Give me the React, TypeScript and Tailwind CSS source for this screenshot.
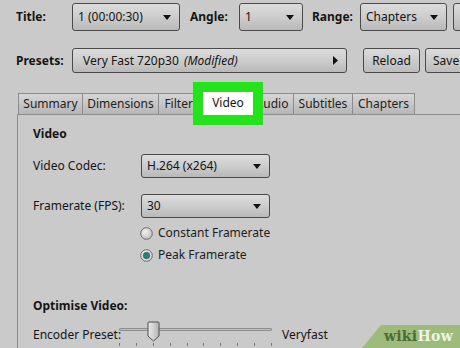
import type { ReactNode } from 'react';

const font = { fontFamily: '"Noto Sans", "Open Sans", Arial, sans-serif' };

function Arrow() {
  return (
    <svg width="8" height="5" viewBox="0 0 8 5" className="shrink-0">
      <path d="M0 0 H8 L4 5 Z" fill="#111" />
    </svg>
  );
}

function Select({ value, w, h = 'h-[28px]', right }: { value: ReactNode; w: string; h?: string; right?: boolean }) {
  return (
    <div
      className={`${w} ${h} shrink-0 flex items-center justify-between pl-[5px] pr-[8px] rounded-[3px] border border-[#4a4a4a] bg-gradient-to-b from-[#dcdcdc] via-[#cdcdcd] to-[#b9b9b9] text-[#151515] overflow-hidden whitespace-nowrap`}
    >
      <span>{value}</span>
      {right ? (
        <svg width="5" height="9" viewBox="0 0 5 9" className="shrink-0">
          <path d="M0 0 L5 4.5 L0 9 Z" fill="#111" />
        </svg>
      ) : (
        <Arrow />
      )}
    </div>
  );
}

function Tab({ label, w }: { label: string; w: string }) {
  return (
    <div
      className={`${w} h-[21px] shrink-0 flex items-center justify-center border border-b-0 border-[#8c8c8c] bg-gradient-to-b from-[#d6d6d6] to-[#b6b6b6] text-[#222] -ml-px first:ml-0`}
    >
      {label}
    </div>
  );
}

function Radio({ checked, label }: { checked?: boolean; label: string }) {
  return (
    <div className="flex items-center h-[16px] pl-[139px]">
      <svg width="13" height="13" viewBox="0 0 13 13" className="shrink-0">
        <defs>
          <radialGradient id={checked ? 'rg1' : 'rg0'} cx="0.4" cy="0.35" r="0.7">
            <stop offset="0" stopColor={checked ? '#eef6f6' : '#f2f2f2'} />
            <stop offset="1" stopColor={checked ? '#c8d2d4' : '#bdbdbd'} />
          </radialGradient>
        </defs>
        <circle cx="6.5" cy="6.5" r="5.8" fill={`url(#${checked ? 'rg1' : 'rg0'})`} stroke="#6a6a6a" strokeWidth="1" />
        {checked && <circle cx="6.5" cy="6.5" r="3.2" fill="#2f7d7a" stroke="#1c4f4d" strokeWidth="0.6" />}
      </svg>
      <span className="ml-[5px] text-[#1d1d1d]">{label}</span>
    </div>
  );
}

function Slider() {
  return (
    <div className="relative w-[153px] h-[28px] shrink-0">
      <div className="absolute left-0 right-0 top-[8px] h-[3px] border border-[#8f8f8f] bg-[#bdbdbd] rounded-[1px]" />
      <div className="absolute left-0 right-0 top-[23px] flex justify-between">
        {Array.from({ length: 10 }).map((_, i) => (
          <div key={i} className="w-px h-[3px] bg-[#777]" />
        ))}
      </div>
      <svg width="13" height="21" viewBox="0 0 13 21" className="absolute left-[28px] top-[1px]">
        <defs>
          <linearGradient id="th" x1="0" x2="1" y1="0" y2="0">
            <stop offset="0" stopColor="#ececec" />
            <stop offset="1" stopColor="#b4b4b4" />
          </linearGradient>
        </defs>
        <path d="M1 2 Q1 1 2 1 H11 Q12 1 12 2 V15 L6.5 20 L1 15 Z" fill="url(#th)" stroke="#4d4d4d" strokeWidth="1" />
      </svg>
    </div>
  );
}

export default function App() {
  return (
    <div className="relative w-[460px] h-[348px] overflow-hidden bg-[#cacaca] text-[12px] leading-[16px] text-[#151515] flex flex-col" style={font}>
      {/* top row */}
      <div className="flex items-center pt-[3px] pl-[16px] whitespace-nowrap">
        <span className="w-[56px] shrink-0 font-bold">Title:</span>
        <Select value="1 (00:00:30)" w="w-[108px]" />
        <span className="ml-[10px] w-[49px] shrink-0 font-bold">Angle:</span>
        <Select value="1" w="w-[64px]" />
        <span className="ml-[9px] w-[48px] shrink-0 font-bold">Range:</span>
        <Select value="Chapters" w="w-[87px]" />
        <div className="ml-[6px] w-[40px] h-[28px] shrink-0 rounded-[3px] border border-[#4a4a4a] bg-gradient-to-b from-[#dcdcdc] to-[#b9b9b9]" />
      </div>

      {/* presets */}
      <div className="flex items-center mt-[17px] pl-[16px] whitespace-nowrap">
        <span className="w-[56px] shrink-0 font-bold">Presets:</span>
        <Select
          w="w-[275px]"
          h="h-[25px]"
          right
          value={
            <>
              <span className="ml-[5px]">Very Fast 720p30</span> <em className="ml-[2px]">(Modified)</em>
            </>
          }
        />
        <div className="ml-[16px] w-[57px] h-[25px] shrink-0 flex items-center justify-center rounded-[3px] border border-[#4a4a4a] bg-gradient-to-b from-[#dcdcdc] to-[#bcbcbc]">
          Reload
        </div>
        <div className="ml-[5px] w-[60px] h-[25px] shrink-0 flex items-center pl-[7px] rounded-[3px] border border-[#4a4a4a] bg-gradient-to-b from-[#dcdcdc] to-[#bcbcbc]">
          Save
        </div>
      </div>

      {/* tabs */}
      <div className="flex mt-[20px] pl-[18px] whitespace-nowrap">
        <Tab label="Summary" w="w-[65px]" />
        <Tab label="Dimensions" w="w-[77px]" />
        <Tab label="Filters" w="w-[47px]" />
        <Tab label="Video" w="w-[47px]" />
        <Tab label="Audio" w="w-[44px]" />
        <Tab label="Subtitles" w="w-[60px]" />
        <Tab label="Chapters" w="w-[63px]" />
      </div>

      {/* panel */}
      <div className="flex-1 ml-[17px] border-l border-t border-[#8c8c8c] pl-[15px] pt-[11px] whitespace-nowrap">
        <div className="font-bold">Video</div>

        <div className="flex items-center mt-[12px]">
          <span className="w-[108px] shrink-0">Video Codec:</span>
          <Select value="H.264 (x264)" w="w-[129px]" h="h-[24px]" />
        </div>
        <div className="flex items-center mt-[16px]">
          <span className="w-[108px] shrink-0">Framerate (FPS):</span>
          <Select value="30" w="w-[129px]" h="h-[24px]" />
        </div>

        <div className="mt-[7px] -ml-[32px]">
          <Radio label="Constant Framerate" />
          <div className="mt-[6px]">
            <Radio checked label="Peak Framerate" />
          </div>
        </div>

        <div className="font-bold mt-[35px]">Optimise Video:</div>
        <div className="flex items-center mt-[6px]">
          <span className="w-[86px] shrink-0 mt-[1px]">Encoder Preset:</span>
          <Slider />
          <span className="ml-[10px] mt-[1px]">Veryfast</span>
        </div>
      </div>

      {/* green highlight around the selected tab */}
      <div className="absolute left-[193px] top-[82px] w-[70px] h-[43px] border-[10px] border-[#23e41b] bg-white flex items-center justify-center">
        <span className="-mt-[1px]">Video</span>
      </div>

      {/* wikiHow mark */}
      <svg width="98" height="23" viewBox="0 0 98 23" className="absolute right-0 bottom-0">
        <path d="M19 0 H98 V23 H0 Z" fill="#9dbb7d" />
      </svg>
      <div
        className="absolute right-[7px] bottom-[3px] text-[14px] leading-[18px] font-bold tracking-[0.3px]"
        style={{ fontFamily: '"DejaVu Serif", "Liberation Serif", serif' }}
      >
        <span className="text-[#4f6b34]">wiki</span>
        <span className="text-[#eef4e6]">How</span>
      </div>
    </div>
  );
}
